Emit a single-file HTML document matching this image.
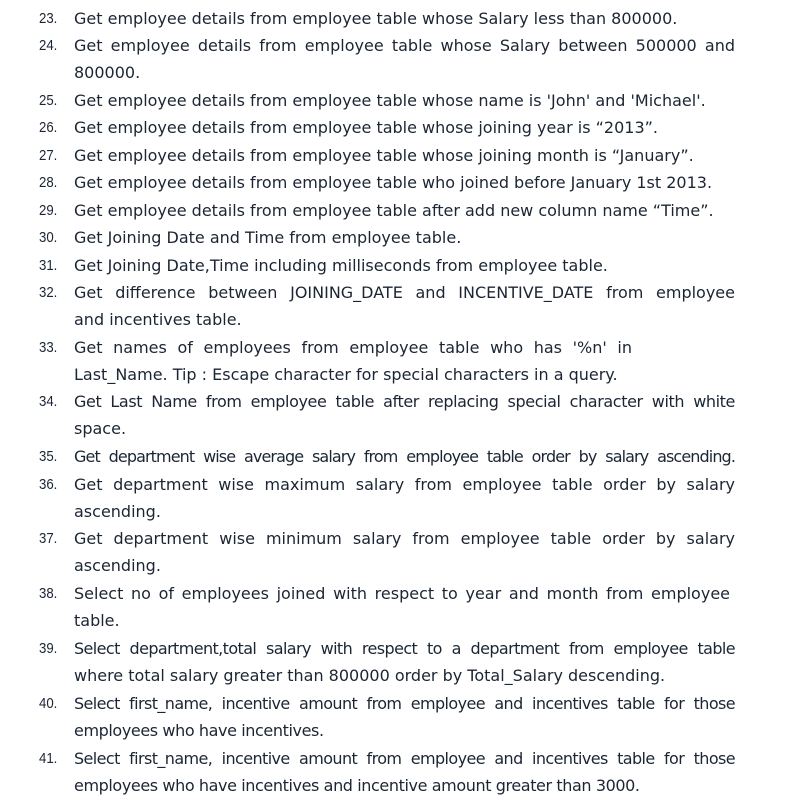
<!DOCTYPE html>
<html><head><meta charset="utf-8"><style>
body{margin:0;width:793px;height:807px;background:#fff;position:relative;overflow:hidden;color:#1b2533;font-family:"DejaVu Sans","Liberation Sans",sans-serif;}
.w{position:absolute;left:0;top:1px;width:793px;height:807px;}
.n{position:absolute;left:39px;font-family:"Liberation Sans Narrow","Liberation Sans",sans-serif;font-size:15px;line-height:20px;transform:scaleX(0.88);transform-origin:left;}
.t{position:absolute;left:74px;font-size:16px;line-height:20px;white-space:nowrap;}
.j{width:661px;text-align:justify;text-align-last:justify;white-space:normal;}
.s{letter-spacing:-0.4px;}
</style></head><body><div class="w">
<div class="n" style="top:8px">23.</div><div class="t" style="top:8px">Get employee details from employee table whose Salary less than 800000.</div>
<div class="n" style="top:35px">24.</div><div class="t j" style="top:35px">Get employee details from employee table whose Salary between 500000 and</div>
<div class="t" style="top:62px">800000.</div>
<div class="n" style="top:90px">25.</div><div class="t" style="top:90px">Get employee details from employee table whose name is 'John' and 'Michael'.</div>
<div class="n" style="top:117px">26.</div><div class="t" style="top:117px">Get employee details from employee table whose joining year is “2013”.</div>
<div class="n" style="top:145px">27.</div><div class="t" style="top:145px">Get employee details from employee table whose joining month is “January”.</div>
<div class="n" style="top:172px">28.</div><div class="t" style="top:172px">Get employee details from employee table who joined before January 1st 2013.</div>
<div class="n" style="top:200px">29.</div><div class="t" style="top:200px">Get employee details from employee table after add new column name “Time”.</div>
<div class="n" style="top:227px">30.</div><div class="t" style="top:227px">Get Joining Date and Time from employee table.</div>
<div class="n" style="top:255px">31.</div><div class="t" style="top:255px">Get Joining Date,Time including milliseconds from employee table.</div>
<div class="n" style="top:282px">32.</div><div class="t j" style="top:282px">Get difference between JOINING_DATE and INCENTIVE_DATE from employee</div>
<div class="t" style="top:309px">and incentives table.</div>
<div class="n" style="top:337px">33.</div><div class="t j" style="top:337px;width:558px">Get names of employees from employee table who has '%n' in</div>
<div class="t" style="top:364px">Last_Name. Tip : Escape character for special characters in a query.</div>
<div class="n" style="top:391px">34.</div><div class="t j s" style="top:391px">Get Last Name from employee table after replacing special character with white</div>
<div class="t" style="top:418px">space.</div>
<div class="n" style="top:446px">35.</div><div class="t j s" style="top:446px;letter-spacing:-0.9px">Get department wise average salary from employee table order by salary ascending.</div>
<div class="n" style="top:474px">36.</div><div class="t j" style="top:474px">Get department wise maximum salary from employee table order by salary</div>
<div class="t" style="top:501px">ascending.</div>
<div class="n" style="top:528px">37.</div><div class="t j" style="top:528px">Get department wise minimum salary from employee table order by salary</div>
<div class="t" style="top:555px">ascending.</div>
<div class="n" style="top:583px">38.</div><div class="t j" style="top:583px;width:656px">Select no of employees joined with respect to year and month from employee</div>
<div class="t" style="top:610px">table.</div>
<div class="n" style="top:638px">39.</div><div class="t j s" style="top:638px;letter-spacing:-0.6px">Select department,total salary with respect to a department from employee table</div>
<div class="t" style="top:665px">where total salary greater than 800000 order by Total_Salary descending.</div>
<div class="n" style="top:693px">40.</div><div class="t j s" style="top:693px;letter-spacing:-0.6px">Select first_name, incentive amount from employee and incentives table for those</div>
<div class="t s" style="top:720px">employees who have incentives.</div>
<div class="n" style="top:748px">41.</div><div class="t j s" style="top:748px;letter-spacing:-0.6px">Select first_name, incentive amount from employee and incentives table for those</div>
<div class="t s" style="top:775px">employees who have incentives and incentive amount greater than 3000.</div>
</div></body></html>
